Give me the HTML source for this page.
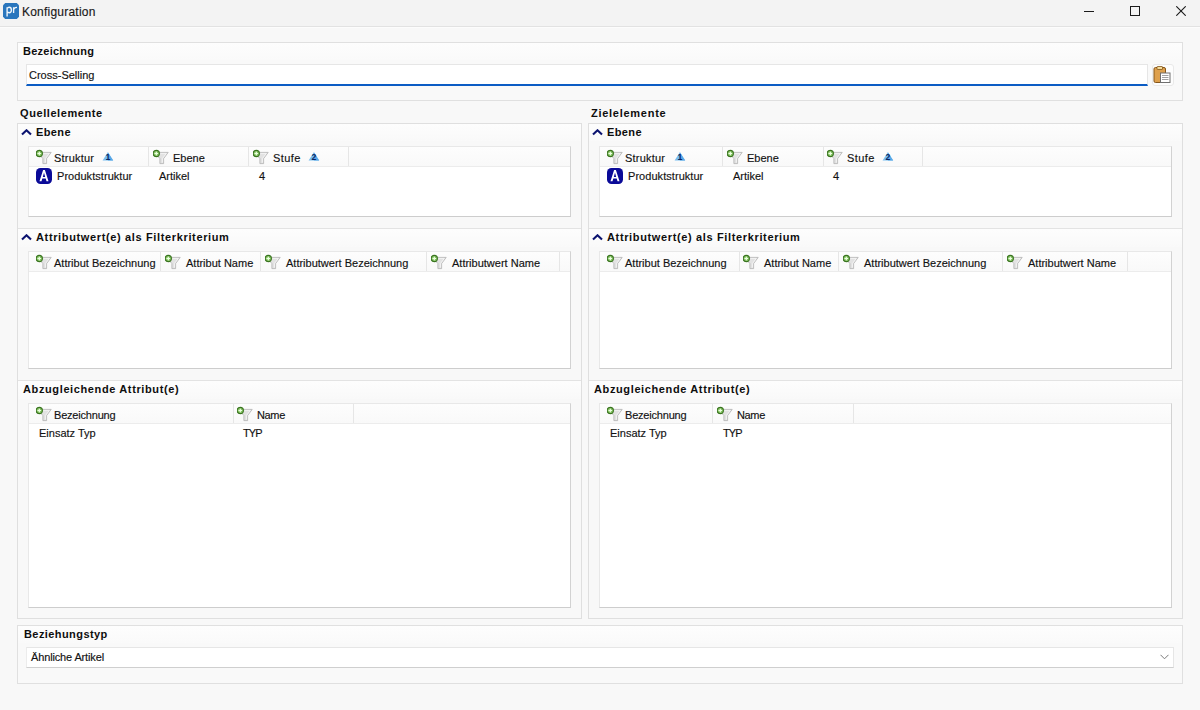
<!DOCTYPE html>
<html><head><meta charset="utf-8">
<style>
*{margin:0;padding:0;box-sizing:border-box}
html,body{width:1200px;height:710px;overflow:hidden}
body{background:#f8f8f8;font-family:"Liberation Sans",sans-serif;position:relative;color:#1f1f1f}
.a{position:absolute}
.t{position:absolute;font-size:11px;line-height:11px;white-space:nowrap;color:#121212;-webkit-text-stroke:0.15px #121212}
.b{font-weight:bold;color:#0e0e0e;-webkit-text-stroke:0}
</style></head><body>
<div class="a" style="left:0px;top:0px;width:1200px;height:26px;background:#f3f3f3;"></div>
<div class="a" style="left:0px;top:26px;width:1200px;height:1px;background:#e2e2e2;"></div>
<div class="a" style="left:0px;top:27px;width:1200px;height:1px;background:#fcfcfc;"></div>
<svg class="a" style="left:3px;top:3px" width="16" height="16" viewBox="0 0 16 16"><path d="M2.2 0H13.8L16 2.2V13.8L13.8 16H2.2L0 13.8V2.2Z" fill="#2a76bd"/><path d="M4.1 13.4V4.3M4.1 5.4Q4.9 4.2 6.2 4.2Q8.4 4.2 8.4 6.9Q8.4 9.7 6.2 9.7Q4.9 9.7 4.1 8.7" fill="none" stroke="#eef5fb" stroke-width="1.35"/><path d="M10.6 9.9V4.3M10.6 6.6Q11.1 4.3 14 4.4" fill="none" stroke="#eef5fb" stroke-width="1.35"/></svg>
<div class="t" style="left:22px;top:6px;font-size:12px;line-height:12px;color:#1a1a1a;letter-spacing:0.22px">Konfiguration</div>
<div class="a" style="left:1084px;top:11px;width:10px;height:1px;background:#1a1a1a;"></div>
<div class="a" style="left:1130px;top:6px;width:10px;height:10px;background:transparent;border:1px solid #1a1a1a"></div>
<svg class="a" style="left:1176px;top:6px" width="10" height="10" viewBox="0 0 10 10"><path d="M0.3 0.3L9.7 9.7M9.7 0.3L0.3 9.7" stroke="#1a1a1a" stroke-width="1.1"/></svg>
<div class="a" style="left:17px;top:42px;width:1166px;height:59px;background:#f9f9f9;border:1px solid #e0e0e0"></div>
<div class="a" style="left:18px;top:43px;width:1164px;height:17px;background:linear-gradient(#fdfdfd,#fafafa);"></div>
<div class="t b" style="left:23px;top:46px;letter-spacing:0.25px">Bezeichnung</div>
<div class="a" style="left:26px;top:64px;width:1122px;height:22px;background:#fff;border:1px solid #e6e6e6;border-bottom:2px solid #0b5cc4"></div>
<div class="t" style="left:29px;top:70px">Cross-Selling</div>
<div class="a" style="left:1152px;top:64px;width:22px;height:22px;background:#fdfdfd;border:1px solid #e9e9e9;border-radius:3px"></div>
<svg class="a" style="left:1152px;top:65px" width="20" height="20" viewBox="0 0 20 20"><rect x="2" y="2.5" width="11.5" height="15" rx="1.5" fill="#dea04c" stroke="#85561b"/><rect x="5" y="1.5" width="5.5" height="3" rx="0.5" fill="#f3dc9a" stroke="#85561b" stroke-width="0.8"/><rect x="8.5" y="8" width="9.5" height="9.5" fill="#fff" stroke="#6f6f6f"/><path d="M10 10.5H16.5M10 12.5H16.5M10 14.5H16.5" stroke="#a0a0a0" stroke-width="1"/></svg>
<div class="t b" style="left:20px;top:108px;letter-spacing:0.58px">Quellelemente</div>
<div class="t b" style="left:591px;top:108px;letter-spacing:0.73px">Zielelemente</div>
<div class="a" style="left:17px;top:123px;width:565px;height:496px;background:#f8f8f8;box-sizing:border-box;border:1px solid #dfdfdf"></div><div class="a" style="left:18px;top:124px;width:563px;height:17px;background:linear-gradient(#fdfdfd,#f9f9f9);"></div><div class="a" style="left:18px;top:230px;width:563px;height:17px;background:linear-gradient(#fdfdfd,#f9f9f9);"></div><div class="a" style="left:18px;top:382px;width:563px;height:17px;background:linear-gradient(#fdfdfd,#f9f9f9);"></div><div class="a" style="left:18px;top:228px;width:563px;height:1px;background:#e3e3e3;"></div><div class="a" style="left:18px;top:229px;width:563px;height:1px;background:#fdfdfd;"></div><div class="a" style="left:18px;top:380px;width:563px;height:1px;background:#e3e3e3;"></div><div class="a" style="left:18px;top:381px;width:563px;height:1px;background:#fdfdfd;"></div><svg class="a" style="left:21px;top:129px" width="11" height="7" viewBox="0 0 11 7"><path d="M1 5.6L5.5 1.3L10 5.6" fill="none" stroke="#0c1470" stroke-width="2.1"/></svg><div class="t b" style="left:36px;top:127px;letter-spacing:0.4px">Ebene</div><svg class="a" style="left:21px;top:234px" width="11" height="7" viewBox="0 0 11 7"><path d="M1 5.6L5.5 1.3L10 5.6" fill="none" stroke="#0c1470" stroke-width="2.1"/></svg><div class="t b" style="left:36px;top:232px;letter-spacing:0.64px">Attributwert(e) als Filterkriterium</div><div class="t b" style="left:23px;top:384px;letter-spacing:0.62px">Abzugleichende Attribut(e)</div><div class="a" style="left:28px;top:146px;width:543px;height:71px;background:#fff;box-sizing:border-box;border:1px solid #e8e8e8;border-right-color:#d2d2d2;border-bottom-color:#cdcdcd"></div><div class="a" style="left:29px;top:147px;width:541px;height:19px;background:linear-gradient(#fdfdfd,#f9f9f9);"></div><div class="a" style="left:29px;top:166px;width:541px;height:1px;background:#ececec;"></div><svg class="a" style="left:36px;top:149px" width="16" height="16" viewBox="0 0 16 16"><path d="M4.5 3.4H15.2L10.6 9.6V14.6H6.9V9.6L3 5.2Z" fill="#e2e2e2" stroke="#b8b8b8" stroke-width="0.9" stroke-linejoin="round"/><path d="M7.5 4.4H13.3L9.6 9.3V13.6" fill="none" stroke="#f6f6f6" stroke-width="0.8"/><circle cx="3.3" cy="4.5" r="3.1" fill="#86c464" stroke="#3a7420" stroke-width="1.1"/><path d="M3.3 2.7V6.3M1.5 4.5H5.1" stroke="#eaffdf" stroke-width="1.2"/></svg><div class="t" style="left:54px;top:153px;letter-spacing:0.2px">Struktur</div><div class="a" style="left:148px;top:147px;width:1px;height:19px;background:#e6e6e6;"></div><svg class="a" style="left:153px;top:149px" width="16" height="16" viewBox="0 0 16 16"><path d="M4.5 3.4H15.2L10.6 9.6V14.6H6.9V9.6L3 5.2Z" fill="#e2e2e2" stroke="#b8b8b8" stroke-width="0.9" stroke-linejoin="round"/><path d="M7.5 4.4H13.3L9.6 9.3V13.6" fill="none" stroke="#f6f6f6" stroke-width="0.8"/><circle cx="3.3" cy="4.5" r="3.1" fill="#86c464" stroke="#3a7420" stroke-width="1.1"/><path d="M3.3 2.7V6.3M1.5 4.5H5.1" stroke="#eaffdf" stroke-width="1.2"/></svg><div class="t" style="left:173px;top:153px">Ebene</div><div class="a" style="left:248px;top:147px;width:1px;height:19px;background:#e6e6e6;"></div><svg class="a" style="left:253px;top:149px" width="16" height="16" viewBox="0 0 16 16"><path d="M4.5 3.4H15.2L10.6 9.6V14.6H6.9V9.6L3 5.2Z" fill="#e2e2e2" stroke="#b8b8b8" stroke-width="0.9" stroke-linejoin="round"/><path d="M7.5 4.4H13.3L9.6 9.3V13.6" fill="none" stroke="#f6f6f6" stroke-width="0.8"/><circle cx="3.3" cy="4.5" r="3.1" fill="#86c464" stroke="#3a7420" stroke-width="1.1"/><path d="M3.3 2.7V6.3M1.5 4.5H5.1" stroke="#eaffdf" stroke-width="1.2"/></svg><div class="t" style="left:273px;top:153px;letter-spacing:0.4px">Stufe</div><div class="a" style="left:348px;top:147px;width:1px;height:19px;background:#e6e6e6;"></div><svg class="a" style="left:102px;top:152px" width="12" height="10" viewBox="0 0 12 10"><path d="M5.9 0.2L11.2 8.4H0.6Z" fill="#78bdf0"/><path d="M5.9 0.2L11.2 8.4H5.9Z" fill="#5aa8e6"/><text x="6" y="7.9" font-size="8.6" font-weight="bold" text-anchor="middle" fill="#0a2660" font-family="Liberation Sans">1</text></svg><svg class="a" style="left:308px;top:152px" width="12" height="10" viewBox="0 0 12 10"><path d="M5.9 0.2L11.2 8.4H0.6Z" fill="#78bdf0"/><path d="M5.9 0.2L11.2 8.4H5.9Z" fill="#5aa8e6"/><text x="6" y="7.9" font-size="8.6" font-weight="bold" text-anchor="middle" fill="#0a2660" font-family="Liberation Sans">2</text></svg><svg class="a" style="left:36px;top:168px" width="16" height="16" viewBox="0 0 16 16"><rect x="0" y="0" width="16" height="16" rx="4.5" fill="#0a0a98"/><path d="M3.5 13.3L7.1 2.1H8.9L12.5 13.3H10.5L9.7 10.6H6.3L5.5 13.3ZM6.8 8.9H9.2L8 4.8Z" fill="#fff"/></svg><div class="t" style="left:57px;top:171px;letter-spacing:0.05px">Produktstruktur</div><div class="t" style="left:159px;top:171px">Artikel</div><div class="t" style="left:259px;top:171px">4</div><div class="a" style="left:28px;top:251px;width:543px;height:118px;background:#fff;box-sizing:border-box;border:1px solid #e8e8e8;border-right-color:#d2d2d2;border-bottom-color:#cdcdcd"></div><div class="a" style="left:29px;top:252px;width:541px;height:19px;background:linear-gradient(#fdfdfd,#f9f9f9);"></div><div class="a" style="left:29px;top:271px;width:541px;height:1px;background:#ececec;"></div><svg class="a" style="left:36px;top:254px" width="16" height="16" viewBox="0 0 16 16"><path d="M4.5 3.4H15.2L10.6 9.6V14.6H6.9V9.6L3 5.2Z" fill="#e2e2e2" stroke="#b8b8b8" stroke-width="0.9" stroke-linejoin="round"/><path d="M7.5 4.4H13.3L9.6 9.3V13.6" fill="none" stroke="#f6f6f6" stroke-width="0.8"/><circle cx="3.3" cy="4.5" r="3.1" fill="#86c464" stroke="#3a7420" stroke-width="1.1"/><path d="M3.3 2.7V6.3M1.5 4.5H5.1" stroke="#eaffdf" stroke-width="1.2"/></svg><div class="t" style="left:54px;top:258px">Attribut Bezeichnung</div><div class="a" style="left:160px;top:252px;width:1px;height:19px;background:#e6e6e6;"></div><svg class="a" style="left:165px;top:254px" width="16" height="16" viewBox="0 0 16 16"><path d="M4.5 3.4H15.2L10.6 9.6V14.6H6.9V9.6L3 5.2Z" fill="#e2e2e2" stroke="#b8b8b8" stroke-width="0.9" stroke-linejoin="round"/><path d="M7.5 4.4H13.3L9.6 9.3V13.6" fill="none" stroke="#f6f6f6" stroke-width="0.8"/><circle cx="3.3" cy="4.5" r="3.1" fill="#86c464" stroke="#3a7420" stroke-width="1.1"/><path d="M3.3 2.7V6.3M1.5 4.5H5.1" stroke="#eaffdf" stroke-width="1.2"/></svg><div class="t" style="left:186px;top:258px">Attribut Name</div><div class="a" style="left:260px;top:252px;width:1px;height:19px;background:#e6e6e6;"></div><svg class="a" style="left:265px;top:254px" width="16" height="16" viewBox="0 0 16 16"><path d="M4.5 3.4H15.2L10.6 9.6V14.6H6.9V9.6L3 5.2Z" fill="#e2e2e2" stroke="#b8b8b8" stroke-width="0.9" stroke-linejoin="round"/><path d="M7.5 4.4H13.3L9.6 9.3V13.6" fill="none" stroke="#f6f6f6" stroke-width="0.8"/><circle cx="3.3" cy="4.5" r="3.1" fill="#86c464" stroke="#3a7420" stroke-width="1.1"/><path d="M3.3 2.7V6.3M1.5 4.5H5.1" stroke="#eaffdf" stroke-width="1.2"/></svg><div class="t" style="left:286px;top:258px">Attributwert Bezeichnung</div><div class="a" style="left:426px;top:252px;width:1px;height:19px;background:#e6e6e6;"></div><svg class="a" style="left:431px;top:254px" width="16" height="16" viewBox="0 0 16 16"><path d="M4.5 3.4H15.2L10.6 9.6V14.6H6.9V9.6L3 5.2Z" fill="#e2e2e2" stroke="#b8b8b8" stroke-width="0.9" stroke-linejoin="round"/><path d="M7.5 4.4H13.3L9.6 9.3V13.6" fill="none" stroke="#f6f6f6" stroke-width="0.8"/><circle cx="3.3" cy="4.5" r="3.1" fill="#86c464" stroke="#3a7420" stroke-width="1.1"/><path d="M3.3 2.7V6.3M1.5 4.5H5.1" stroke="#eaffdf" stroke-width="1.2"/></svg><div class="t" style="left:452px;top:258px">Attributwert Name</div><div class="a" style="left:559px;top:252px;width:1px;height:19px;background:#e6e6e6;"></div><div class="a" style="left:28px;top:403px;width:543px;height:205px;background:#fff;box-sizing:border-box;border:1px solid #e8e8e8;border-right-color:#d2d2d2;border-bottom-color:#cdcdcd"></div><div class="a" style="left:29px;top:404px;width:541px;height:19px;background:linear-gradient(#fdfdfd,#f9f9f9);"></div><div class="a" style="left:29px;top:423px;width:541px;height:1px;background:#ececec;"></div><svg class="a" style="left:36px;top:406px" width="16" height="16" viewBox="0 0 16 16"><path d="M4.5 3.4H15.2L10.6 9.6V14.6H6.9V9.6L3 5.2Z" fill="#e2e2e2" stroke="#b8b8b8" stroke-width="0.9" stroke-linejoin="round"/><path d="M7.5 4.4H13.3L9.6 9.3V13.6" fill="none" stroke="#f6f6f6" stroke-width="0.8"/><circle cx="3.3" cy="4.5" r="3.1" fill="#86c464" stroke="#3a7420" stroke-width="1.1"/><path d="M3.3 2.7V6.3M1.5 4.5H5.1" stroke="#eaffdf" stroke-width="1.2"/></svg><div class="t" style="left:54px;top:410px;letter-spacing:-0.2px">Bezeichnung</div><div class="a" style="left:233px;top:404px;width:1px;height:19px;background:#e6e6e6;"></div><svg class="a" style="left:237px;top:406px" width="16" height="16" viewBox="0 0 16 16"><path d="M4.5 3.4H15.2L10.6 9.6V14.6H6.9V9.6L3 5.2Z" fill="#e2e2e2" stroke="#b8b8b8" stroke-width="0.9" stroke-linejoin="round"/><path d="M7.5 4.4H13.3L9.6 9.3V13.6" fill="none" stroke="#f6f6f6" stroke-width="0.8"/><circle cx="3.3" cy="4.5" r="3.1" fill="#86c464" stroke="#3a7420" stroke-width="1.1"/><path d="M3.3 2.7V6.3M1.5 4.5H5.1" stroke="#eaffdf" stroke-width="1.2"/></svg><div class="t" style="left:257px;top:410px;letter-spacing:-0.35px">Name</div><div class="a" style="left:353px;top:404px;width:1px;height:19px;background:#e6e6e6;"></div><div class="t" style="left:39px;top:428px">Einsatz Typ</div><div class="t" style="left:243px;top:428px;letter-spacing:-0.9px">TYP</div>
<div class="a" style="left:588px;top:123px;width:595px;height:496px;background:#f8f8f8;box-sizing:border-box;border:1px solid #dfdfdf"></div><div class="a" style="left:589px;top:124px;width:593px;height:17px;background:linear-gradient(#fdfdfd,#f9f9f9);"></div><div class="a" style="left:589px;top:230px;width:593px;height:17px;background:linear-gradient(#fdfdfd,#f9f9f9);"></div><div class="a" style="left:589px;top:382px;width:593px;height:17px;background:linear-gradient(#fdfdfd,#f9f9f9);"></div><div class="a" style="left:589px;top:228px;width:593px;height:1px;background:#e3e3e3;"></div><div class="a" style="left:589px;top:229px;width:593px;height:1px;background:#fdfdfd;"></div><div class="a" style="left:589px;top:380px;width:593px;height:1px;background:#e3e3e3;"></div><div class="a" style="left:589px;top:381px;width:593px;height:1px;background:#fdfdfd;"></div><svg class="a" style="left:592px;top:129px" width="11" height="7" viewBox="0 0 11 7"><path d="M1 5.6L5.5 1.3L10 5.6" fill="none" stroke="#0c1470" stroke-width="2.1"/></svg><div class="t b" style="left:607px;top:127px;letter-spacing:0.4px">Ebene</div><svg class="a" style="left:592px;top:234px" width="11" height="7" viewBox="0 0 11 7"><path d="M1 5.6L5.5 1.3L10 5.6" fill="none" stroke="#0c1470" stroke-width="2.1"/></svg><div class="t b" style="left:607px;top:232px;letter-spacing:0.64px">Attributwert(e) als Filterkriterium</div><div class="t b" style="left:594px;top:384px;letter-spacing:0.62px">Abzugleichende Attribut(e)</div><div class="a" style="left:599px;top:146px;width:573px;height:71px;background:#fff;box-sizing:border-box;border:1px solid #e8e8e8;border-right-color:#d2d2d2;border-bottom-color:#cdcdcd"></div><div class="a" style="left:600px;top:147px;width:571px;height:19px;background:linear-gradient(#fdfdfd,#f9f9f9);"></div><div class="a" style="left:600px;top:166px;width:571px;height:1px;background:#ececec;"></div><svg class="a" style="left:607px;top:149px" width="16" height="16" viewBox="0 0 16 16"><path d="M4.5 3.4H15.2L10.6 9.6V14.6H6.9V9.6L3 5.2Z" fill="#e2e2e2" stroke="#b8b8b8" stroke-width="0.9" stroke-linejoin="round"/><path d="M7.5 4.4H13.3L9.6 9.3V13.6" fill="none" stroke="#f6f6f6" stroke-width="0.8"/><circle cx="3.3" cy="4.5" r="3.1" fill="#86c464" stroke="#3a7420" stroke-width="1.1"/><path d="M3.3 2.7V6.3M1.5 4.5H5.1" stroke="#eaffdf" stroke-width="1.2"/></svg><div class="t" style="left:625px;top:153px;letter-spacing:0.2px">Struktur</div><div class="a" style="left:722px;top:147px;width:1px;height:19px;background:#e6e6e6;"></div><svg class="a" style="left:727px;top:149px" width="16" height="16" viewBox="0 0 16 16"><path d="M4.5 3.4H15.2L10.6 9.6V14.6H6.9V9.6L3 5.2Z" fill="#e2e2e2" stroke="#b8b8b8" stroke-width="0.9" stroke-linejoin="round"/><path d="M7.5 4.4H13.3L9.6 9.3V13.6" fill="none" stroke="#f6f6f6" stroke-width="0.8"/><circle cx="3.3" cy="4.5" r="3.1" fill="#86c464" stroke="#3a7420" stroke-width="1.1"/><path d="M3.3 2.7V6.3M1.5 4.5H5.1" stroke="#eaffdf" stroke-width="1.2"/></svg><div class="t" style="left:747px;top:153px">Ebene</div><div class="a" style="left:823px;top:147px;width:1px;height:19px;background:#e6e6e6;"></div><svg class="a" style="left:827px;top:149px" width="16" height="16" viewBox="0 0 16 16"><path d="M4.5 3.4H15.2L10.6 9.6V14.6H6.9V9.6L3 5.2Z" fill="#e2e2e2" stroke="#b8b8b8" stroke-width="0.9" stroke-linejoin="round"/><path d="M7.5 4.4H13.3L9.6 9.3V13.6" fill="none" stroke="#f6f6f6" stroke-width="0.8"/><circle cx="3.3" cy="4.5" r="3.1" fill="#86c464" stroke="#3a7420" stroke-width="1.1"/><path d="M3.3 2.7V6.3M1.5 4.5H5.1" stroke="#eaffdf" stroke-width="1.2"/></svg><div class="t" style="left:847px;top:153px;letter-spacing:0.4px">Stufe</div><div class="a" style="left:922px;top:147px;width:1px;height:19px;background:#e6e6e6;"></div><svg class="a" style="left:674px;top:152px" width="12" height="10" viewBox="0 0 12 10"><path d="M5.9 0.2L11.2 8.4H0.6Z" fill="#78bdf0"/><path d="M5.9 0.2L11.2 8.4H5.9Z" fill="#5aa8e6"/><text x="6" y="7.9" font-size="8.6" font-weight="bold" text-anchor="middle" fill="#0a2660" font-family="Liberation Sans">1</text></svg><svg class="a" style="left:882px;top:152px" width="12" height="10" viewBox="0 0 12 10"><path d="M5.9 0.2L11.2 8.4H0.6Z" fill="#78bdf0"/><path d="M5.9 0.2L11.2 8.4H5.9Z" fill="#5aa8e6"/><text x="6" y="7.9" font-size="8.6" font-weight="bold" text-anchor="middle" fill="#0a2660" font-family="Liberation Sans">2</text></svg><svg class="a" style="left:607px;top:168px" width="16" height="16" viewBox="0 0 16 16"><rect x="0" y="0" width="16" height="16" rx="4.5" fill="#0a0a98"/><path d="M3.5 13.3L7.1 2.1H8.9L12.5 13.3H10.5L9.7 10.6H6.3L5.5 13.3ZM6.8 8.9H9.2L8 4.8Z" fill="#fff"/></svg><div class="t" style="left:628px;top:171px;letter-spacing:0.05px">Produktstruktur</div><div class="t" style="left:733px;top:171px">Artikel</div><div class="t" style="left:833px;top:171px">4</div><div class="a" style="left:599px;top:251px;width:573px;height:118px;background:#fff;box-sizing:border-box;border:1px solid #e8e8e8;border-right-color:#d2d2d2;border-bottom-color:#cdcdcd"></div><div class="a" style="left:600px;top:252px;width:571px;height:19px;background:linear-gradient(#fdfdfd,#f9f9f9);"></div><div class="a" style="left:600px;top:271px;width:571px;height:1px;background:#ececec;"></div><svg class="a" style="left:607px;top:254px" width="16" height="16" viewBox="0 0 16 16"><path d="M4.5 3.4H15.2L10.6 9.6V14.6H6.9V9.6L3 5.2Z" fill="#e2e2e2" stroke="#b8b8b8" stroke-width="0.9" stroke-linejoin="round"/><path d="M7.5 4.4H13.3L9.6 9.3V13.6" fill="none" stroke="#f6f6f6" stroke-width="0.8"/><circle cx="3.3" cy="4.5" r="3.1" fill="#86c464" stroke="#3a7420" stroke-width="1.1"/><path d="M3.3 2.7V6.3M1.5 4.5H5.1" stroke="#eaffdf" stroke-width="1.2"/></svg><div class="t" style="left:625px;top:258px">Attribut Bezeichnung</div><div class="a" style="left:739px;top:252px;width:1px;height:19px;background:#e6e6e6;"></div><svg class="a" style="left:743px;top:254px" width="16" height="16" viewBox="0 0 16 16"><path d="M4.5 3.4H15.2L10.6 9.6V14.6H6.9V9.6L3 5.2Z" fill="#e2e2e2" stroke="#b8b8b8" stroke-width="0.9" stroke-linejoin="round"/><path d="M7.5 4.4H13.3L9.6 9.3V13.6" fill="none" stroke="#f6f6f6" stroke-width="0.8"/><circle cx="3.3" cy="4.5" r="3.1" fill="#86c464" stroke="#3a7420" stroke-width="1.1"/><path d="M3.3 2.7V6.3M1.5 4.5H5.1" stroke="#eaffdf" stroke-width="1.2"/></svg><div class="t" style="left:764px;top:258px">Attribut Name</div><div class="a" style="left:838px;top:252px;width:1px;height:19px;background:#e6e6e6;"></div><svg class="a" style="left:843px;top:254px" width="16" height="16" viewBox="0 0 16 16"><path d="M4.5 3.4H15.2L10.6 9.6V14.6H6.9V9.6L3 5.2Z" fill="#e2e2e2" stroke="#b8b8b8" stroke-width="0.9" stroke-linejoin="round"/><path d="M7.5 4.4H13.3L9.6 9.3V13.6" fill="none" stroke="#f6f6f6" stroke-width="0.8"/><circle cx="3.3" cy="4.5" r="3.1" fill="#86c464" stroke="#3a7420" stroke-width="1.1"/><path d="M3.3 2.7V6.3M1.5 4.5H5.1" stroke="#eaffdf" stroke-width="1.2"/></svg><div class="t" style="left:864px;top:258px">Attributwert Bezeichnung</div><div class="a" style="left:1002px;top:252px;width:1px;height:19px;background:#e6e6e6;"></div><svg class="a" style="left:1007px;top:254px" width="16" height="16" viewBox="0 0 16 16"><path d="M4.5 3.4H15.2L10.6 9.6V14.6H6.9V9.6L3 5.2Z" fill="#e2e2e2" stroke="#b8b8b8" stroke-width="0.9" stroke-linejoin="round"/><path d="M7.5 4.4H13.3L9.6 9.3V13.6" fill="none" stroke="#f6f6f6" stroke-width="0.8"/><circle cx="3.3" cy="4.5" r="3.1" fill="#86c464" stroke="#3a7420" stroke-width="1.1"/><path d="M3.3 2.7V6.3M1.5 4.5H5.1" stroke="#eaffdf" stroke-width="1.2"/></svg><div class="t" style="left:1028px;top:258px">Attributwert Name</div><div class="a" style="left:1127px;top:252px;width:1px;height:19px;background:#e6e6e6;"></div><div class="a" style="left:599px;top:403px;width:573px;height:205px;background:#fff;box-sizing:border-box;border:1px solid #e8e8e8;border-right-color:#d2d2d2;border-bottom-color:#cdcdcd"></div><div class="a" style="left:600px;top:404px;width:571px;height:19px;background:linear-gradient(#fdfdfd,#f9f9f9);"></div><div class="a" style="left:600px;top:423px;width:571px;height:1px;background:#ececec;"></div><svg class="a" style="left:607px;top:406px" width="16" height="16" viewBox="0 0 16 16"><path d="M4.5 3.4H15.2L10.6 9.6V14.6H6.9V9.6L3 5.2Z" fill="#e2e2e2" stroke="#b8b8b8" stroke-width="0.9" stroke-linejoin="round"/><path d="M7.5 4.4H13.3L9.6 9.3V13.6" fill="none" stroke="#f6f6f6" stroke-width="0.8"/><circle cx="3.3" cy="4.5" r="3.1" fill="#86c464" stroke="#3a7420" stroke-width="1.1"/><path d="M3.3 2.7V6.3M1.5 4.5H5.1" stroke="#eaffdf" stroke-width="1.2"/></svg><div class="t" style="left:625px;top:410px;letter-spacing:-0.2px">Bezeichnung</div><div class="a" style="left:712px;top:404px;width:1px;height:19px;background:#e6e6e6;"></div><svg class="a" style="left:717px;top:406px" width="16" height="16" viewBox="0 0 16 16"><path d="M4.5 3.4H15.2L10.6 9.6V14.6H6.9V9.6L3 5.2Z" fill="#e2e2e2" stroke="#b8b8b8" stroke-width="0.9" stroke-linejoin="round"/><path d="M7.5 4.4H13.3L9.6 9.3V13.6" fill="none" stroke="#f6f6f6" stroke-width="0.8"/><circle cx="3.3" cy="4.5" r="3.1" fill="#86c464" stroke="#3a7420" stroke-width="1.1"/><path d="M3.3 2.7V6.3M1.5 4.5H5.1" stroke="#eaffdf" stroke-width="1.2"/></svg><div class="t" style="left:737px;top:410px;letter-spacing:-0.35px">Name</div><div class="a" style="left:853px;top:404px;width:1px;height:19px;background:#e6e6e6;"></div><div class="t" style="left:610px;top:428px">Einsatz Typ</div><div class="t" style="left:723px;top:428px;letter-spacing:-0.9px">TYP</div>
<div class="a" style="left:17px;top:625px;width:1166px;height:59px;background:#f9f9f9;border:1px solid #e0e0e0"></div>
<div class="a" style="left:18px;top:626px;width:1164px;height:17px;background:linear-gradient(#fdfdfd,#fafafa);"></div>
<div class="t b" style="left:24px;top:629px;letter-spacing:0.42px">Beziehungstyp</div>
<div class="a" style="left:26px;top:647px;width:1148px;height:21px;background:#fff;border:1px solid #e6e6e6;border-left-color:#ececec;border-bottom-color:#cfcfcf"></div>
<div class="t" style="left:31px;top:652px;letter-spacing:-0.14px">Ähnliche Artikel</div>
<svg class="a" style="left:1160px;top:654px" width="9" height="6" viewBox="0 0 9 6"><path d="M0.5 0.8L4.5 4.8L8.5 0.8" fill="none" stroke="#7a7a7a" stroke-width="1"/></svg>
</body></html>
